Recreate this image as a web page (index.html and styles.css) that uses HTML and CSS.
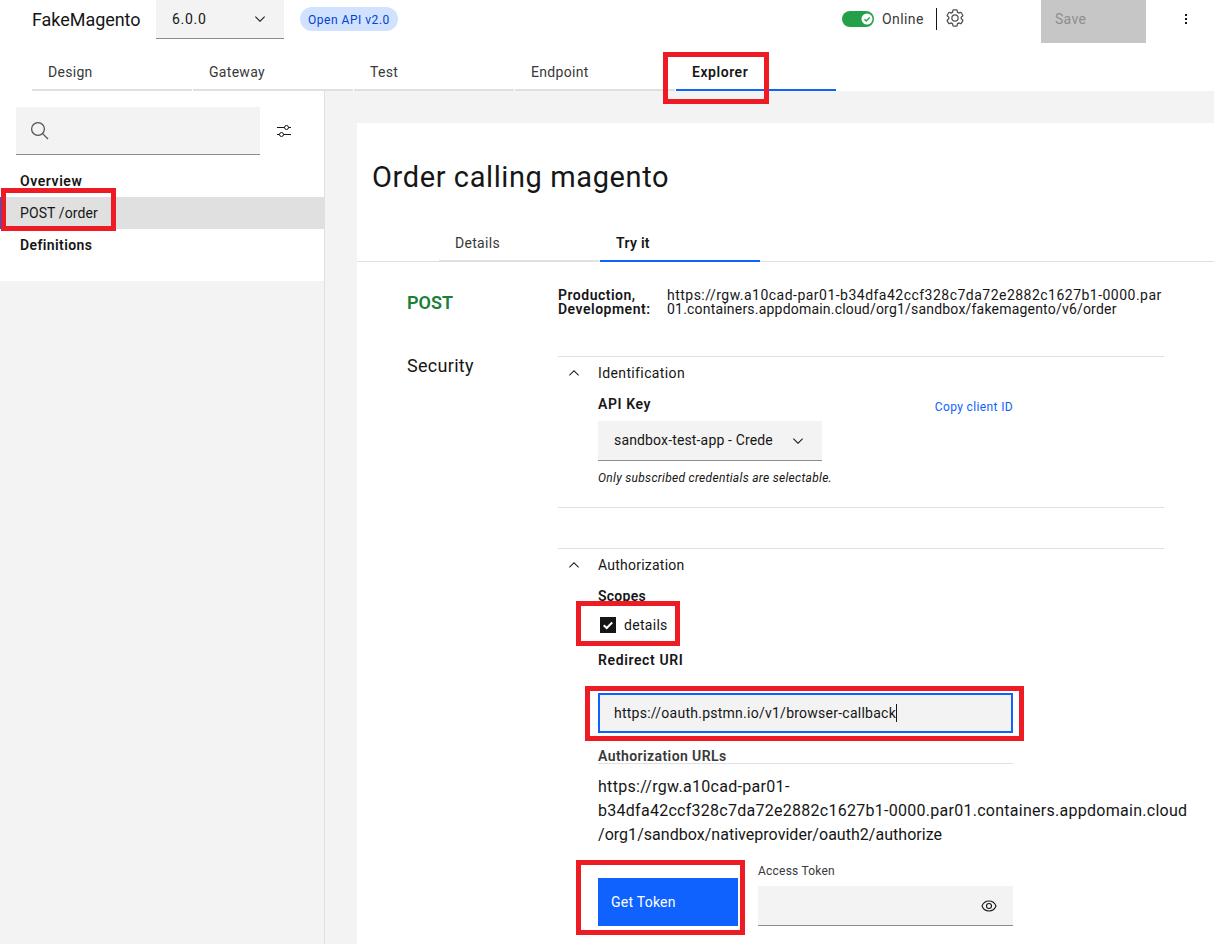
FILE: index.html
```
<!DOCTYPE html>
<html lang="en">
<head>
<meta charset="utf-8">
<title>FakeMagento - Explorer</title>
<link rel="stylesheet" href="styles.css">
</head>
<body>
<div class="app">
  <header class="topbar">
    <h1 class="api-name">FakeMagento</h1>
    <div class="version"><span class="version-label">6.0.0</span>
      <svg width="16" height="16" viewBox="0 0 16 16"><path fill="#161616" d="M8 11 3 6 3.7 5.3 8 9.6 12.3 5.3 13 6z"/></svg>
    </div>
    <span class="tag">Open API v2.0</span>
    <div class="status">
      <span class="toggle"><svg width="12" height="12" viewBox="0 0 12 12"><circle cx="6" cy="6" r="5.5" fill="#fff"/><path d="M3.5 6.2 5.2 7.9 8.7 4.4" fill="none" stroke="#24a148" stroke-width="1.4"/></svg></span>
      <span class="online">Online</span>
      <span class="divider"></span>
      <svg class="gear" width="20" height="20" viewBox="0 0 32 32"><path fill="#525252" d="M27 16.76c0-.25 0-.5 0-.76s0-.51 0-.77l1.92-1.68A2 2 0 0 0 29.3 11L26.94 7a2 2 0 0 0-1.73-1 2 2 0 0 0-.64.1l-2.43.82a11.35 11.35 0 0 0-1.31-.75l-.51-2.52a2 2 0 0 0-2-1.61H13.64a2 2 0 0 0-2 1.61l-.51 2.52a11.48 11.48 0 0 0-1.32.75L7.43 6.06A2 2 0 0 0 6.79 6 2 2 0 0 0 5.06 7L2.7 11a2 2 0 0 0 .41 2.51L5 15.24c0 .25 0 .5 0 .76s0 .51 0 .77L3.11 18.45A2 2 0 0 0 2.7 21L5.06 25a2 2 0 0 0 1.73 1 2 2 0 0 0 .64-.1l2.43-.82a11.35 11.35 0 0 0 1.31.75l.51 2.52a2 2 0 0 0 2 1.61h4.72a2 2 0 0 0 2-1.61l.51-2.52a11.48 11.48 0 0 0 1.32-.75l2.42.82a2 2 0 0 0 .64.1 2 2 0 0 0 1.73-1L29.3 21a2 2 0 0 0-.41-2.51ZM25.21 24l-3.43-1.16a8.86 8.86 0 0 1-2.71 1.57L18.36 28H13.64l-.71-3.55a9.36 9.36 0 0 1-2.7-1.57L6.79 24 4.43 20l2.72-2.4a8.9 8.9 0 0 1 0-3.13L4.43 12 6.79 8l3.43 1.16a8.86 8.86 0 0 1 2.71-1.57L13.64 4h4.72l.71 3.55a9.36 9.36 0 0 1 2.7 1.57L25.21 8 27.57 12l-2.72 2.4a8.9 8.9 0 0 1 0 3.13L27.57 20Z"/><circle cx="16" cy="16" r="5" fill="none" stroke="#525252" stroke-width="2"/></svg>
    </div>
    <button class="save">Save</button>
    <svg class="kebab" width="16" height="16" viewBox="0 0 16 16" fill="#161616"><rect x="7" y="3" width="2" height="2"/><rect x="7" y="7" width="2" height="2"/><rect x="7" y="11" width="2" height="2"/></svg>
  </header>
  <nav class="tabs main-tabs">
    <a class="tab">Design</a><a class="tab">Gateway</a><a class="tab">Test</a><a class="tab">Endpoint</a><a class="tab selected t-explorer">Explorer</a>
  </nav>
  <div class="body">
    <aside class="sidebar">
      <div class="side-panel">
        <div class="search-row">
          <div class="search"><svg width="20" height="20" viewBox="0 0 20 20" fill="none" stroke="#525252" stroke-width="1.25"><circle cx="8" cy="8" r="6.4"/><path d="M12.6 12.6 18 18"/></svg></div>
          <svg width="16" height="16" viewBox="0 0 16 16" fill="none" stroke="#161616"><path d="M1 4.5h7.500M12.500 4.500H15M1 11.500h2.500M7.500 11.500H15"/><circle cx="10.500" cy="4.500" r="2"/><circle cx="5.500" cy="11.500" r="2"/></svg>
        </div>
        <div class="side-item strong overview">Overview</div>
        <div class="side-item active">POST /order</div>
        <div class="side-item strong definitions">Definitions</div>
      </div>
    </aside>
    <main class="content">
      <h2 class="title">Order calling magento</h2>
      <nav class="tabs sub-tabs"><a class="tab">Details</a><a class="tab selected">Try it</a></nav>
      <section class="endpoint">
        <div class="method">POST</div>
        <div class="env">Production,<br>Development:</div>
        <div class="url"><span class="url-a">https://rgw.a10cad-par01-b34dfa42ccf328c7da72e2882c1627b1-0000.par</span><br><span class="url-b">01.containers.appdomain.cloud/org1/sandbox/fakemagento/v6/order</span></div>
      </section>
      <section class="security">
        <div class="security-label">Security</div>
        <div class="panels">
          <div class="panel identification">
            <div class="panel-head"><svg width="16" height="16" viewBox="0 0 16 16"><path fill="#161616" d="M8 5 13 10 12.3 10.7 8 6.4 3.7 10.7 3 10z"/></svg><span class="ident">Identification</span></div>
            <div class="key-row"><span class="strong apikey">API Key</span><a class="copy">Copy client ID</a></div>
            <div class="select"><span class="select-label">sandbox-test-app - Crede</span><svg width="16" height="16" viewBox="0 0 16 16"><path fill="#161616" d="M8 11 3 6 3.7 5.3 8 9.6 12.3 5.3 13 6z"/></svg></div>
            <div class="hint">Only subscribed credentials are selectable.</div>
          </div>
          <div class="panel authorization">
            <div class="panel-head"><svg width="16" height="16" viewBox="0 0 16 16"><path fill="#161616" d="M8 5 13 10 12.3 10.7 8 6.4 3.7 10.7 3 10z"/></svg><span class="authz">Authorization</span></div>
            <div class="strong scopes">Scopes</div>
            <div class="check"><svg width="16" height="16" viewBox="0 0 16 16"><rect width="16" height="16" fill="#161616"/><path d="M3.7 8.2 6.7 11 12.2 5.5" fill="none" stroke="#fff" stroke-width="2"/></svg><span>details</span></div>
            <div class="strong redirect">Redirect URI</div>
            <div class="input"><span class="input-value">https://oauth.pstmn.io/v1/browser-callback</span><span class="caret"></span></div>
            <div class="strong auth-urls">Authorization URLs</div>
            <div class="auth-url"><span>https://rgw.a10cad-par01-</span><br><span class="au-b">b34dfa42ccf328c7da72e2882c1627b1-0000.par01.containers.appdomain.cloud</span><br><span class="au-c">/org1/sandbox/nativeprovider/oauth2/authorize</span></div>
            <div class="token-row">
              <button class="get-token">Get Token</button>
              <div class="token"><div class="token-label">Access Token</div>
                <div class="token-input"><svg width="16" height="16" viewBox="0 0 16 16" fill="none" stroke="#161616" stroke-width="1.1"><path d="M1 8C2.2 5 4.800 3 8 3s5.800 2 7 5c-1.200 3-3.800 5-7 5S2.200 11 1 8z"/><circle cx="8" cy="8" r="2.500"/></svg></div>
              </div>
            </div>
          </div>
        </div>
      </section>
    </main>
  </div>
  <i class="mark mark-explorer"></i><i class="mark mark-order"></i><i class="mark mark-scope"></i><i class="mark mark-uri"></i><i class="mark mark-token"></i>
</div>
</body>
</html>
```
FILE: styles.css
```
* { box-sizing: border-box; }
body { margin: 0; background: #f3f3f3; color: #161616; font: 14px/18px Roboto, "Liberation Sans", sans-serif; letter-spacing: .3px; }
svg { display: block; flex: none; }
h1, h2 { margin: 0; font-weight: 400; }
button { border: 0; padding: 0; font: inherit; letter-spacing: inherit; text-align: left; }
span, a { white-space: nowrap; }
.strong { font-weight: 600; }

.app { position: relative; width: 1214px; height: 944px; overflow: hidden; }
.topbar { display: flex; height: 51px; padding-left: 32px; background: #fff; }
.api-name { width: 124px; font-size: 18px; line-height: 39px; letter-spacing: -.05px; white-space: nowrap; }
.version { display: flex; align-items: center; justify-content: space-between; width: 128px; height: 39px; padding: 0 16px; background: #f3f3f3; border-bottom: 1px solid #8d8d8d; }
.version-label { letter-spacing: .7px; }
.tag { height: 24px; margin: 7px 0 0 16px; padding: 0 8px; width: 98px; border-radius: 12px; background: #d0e2ff; color: #0043ce; font-size: 12px; line-height: 26px; letter-spacing: .52px; }
.status { display: flex; align-items: center; height: 38px; margin-left: 444px; width: 199px; color: #393939; }
.toggle { display: flex; align-items: center; justify-content: flex-end; width: 32px; height: 16px; padding-right: 1px; border-radius: 8px; background: #24a148; }
.online { width: 54px; margin-left: 8px; letter-spacing: .4px; }
.divider { width: 1px; height: 22px; background: #161616; }
.gear { margin: 0 0 2px 8px; }
.save { width: 105px; height: 43px; padding: 0 0 5px 14px; background: #c6c6c6; color: #8d8d8d; }
.kebab { margin: 11px 0 0 32px; }

.tabs { display: flex; gap: 1px; }
.tab { width: 160px; height: 40px; padding-left: 16px; line-height: 42px; color: #393939; border-bottom: 2px solid #e0e0e0; }
.tab.selected { color: #161616; font-weight: 600; border-color: #0f62fe; }
.tab.t-explorer { letter-spacing: .55px; }
.main-tabs { height: 40px; padding-left: 32px; background: #fff; }

.body { display: flex; height: 853px; }
.sidebar { width: 325px; border-right: 1px solid #e0e0e0; }
.side-panel { height: 190px; padding-top: 16px; background: #fff; }
.search-row { display: flex; align-items: center; gap: 16px; height: 48px; padding-left: 16px; margin-bottom: 10px; }
.search { width: 244px; height: 48px; padding: 14px; background: #f3f3f3; border-bottom: 1px solid #8d8d8d; }
.side-item { height: 32px; padding-left: 20px; line-height: 32px; }
.side-item.active { background: #e0e0e0; border-left: 4px solid #0f62fe; padding-left: 16px; letter-spacing: .1px; }
.overview { letter-spacing: .57px; }
.definitions { letter-spacing: .4px; }

.content { flex: 1; margin: 32px 0 0 32px; background: #fff; }
.title { height: 98px; padding: 35px 15px 0; font-size: 29px; line-height: 38px; letter-spacing: .6px; }
.sub-tabs { height: 41px; padding-left: 82px; border-bottom: 1px solid #e0e0e0; }
.sub-tabs .tab { height: 41px; line-height: 44px; }

.endpoint { display: flex; height: 94px; padding: 26px 0 0 50px; line-height: 14px; }
.method { width: 151px; font-size: 18px; font-weight: 600; line-height: 30px; letter-spacing: 0; color: #198038; }
.env { width: 109px; font-weight: 600; letter-spacing: .5px; }
.url-a { letter-spacing: .48px; }
.url-b { letter-spacing: .2px; }
.security { display: flex; padding-left: 50px; }
.security-label { width: 151px; font-size: 18px; line-height: 20px; }
.panels { width: 606px; }
.panel { padding-left: 40px; border-top: 1px solid #e0e0e0; }
.identification { height: 152px; margin-bottom: 40px; border-bottom: 1px solid #e0e0e0; }
.panel-head { display: flex; align-items: center; gap: 16px; height: 32px; margin-left: -32px; }
.ident { letter-spacing: .38px; }
.authz { letter-spacing: .23px; }
.key-row { display: flex; justify-content: space-between; width: 415px; height: 32px; line-height: 30px; }
.apikey { letter-spacing: .6px; }
.copy { font-size: 12px; line-height: 37px; letter-spacing: .36px; color: #0f62fe; }
.select { display: flex; align-items: center; justify-content: space-between; width: 224px; height: 40px; padding: 0 16px; background: #f3f3f3; border-bottom: 1px solid #8d8d8d; letter-spacing: .15px; }
.select-label { padding-bottom: 2px; }
.hint { margin-top: 8px; font-size: 12px; font-style: italic; white-space: nowrap; }
.scopes { height: 31px; line-height: 30px; letter-spacing: .25px; }
.check { display: flex; align-items: center; gap: 8px; height: 26px; padding-left: 2px; }
.redirect { height: 55px; line-height: 44px; letter-spacing: .62px; }
.input { display: flex; align-items: center; width: 415px; height: 40px; padding-left: 14px; background: #f3f3f3; border: 2px solid #0f62fe; }
.input-value { letter-spacing: .25px; }
.caret { width: 1px; height: 18px; background: #161616; }
.auth-urls { width: 415px; height: 31px; padding-top: 14px; letter-spacing: .41px; color: #393939; border-bottom: 1px solid #e0e0e0; }
.auth-url { padding-top: 11px; font-size: 16px; line-height: 24px; }
.au-b { letter-spacing: .27px; }
.au-c { letter-spacing: .03px; }
.token-row { display: flex; gap: 20px; padding-top: 13px; }
.get-token { width: 140px; height: 48px; margin-top: 18px; padding-left: 13px; background: #0f62fe; color: #fff; letter-spacing: .25px; }
.token-label { height: 26px; font-size: 12px; line-height: 22px; letter-spacing: .22px; color: #393939; }
.token-input { width: 255px; height: 40px; padding: 12px 16px; display: flex; justify-content: flex-end; background: #f3f3f3; border-bottom: 1px solid #8d8d8d; }

/* Callout frames drawn over the page */
.mark { position: absolute; border: 5px solid #ed1c24; }
.mark-explorer { left: 663px; top: 52px; width: 106px; height: 52px; }
.mark-order { left: 1px; top: 188px; width: 115px; height: 43px; }
.mark-scope { left: 576px; top: 601px; width: 104px; height: 45px; }
.mark-uri { left: 585px; top: 686px; width: 439px; height: 55px; }
.mark-token { left: 576px; top: 860px; width: 169px; height: 75px; }
```
